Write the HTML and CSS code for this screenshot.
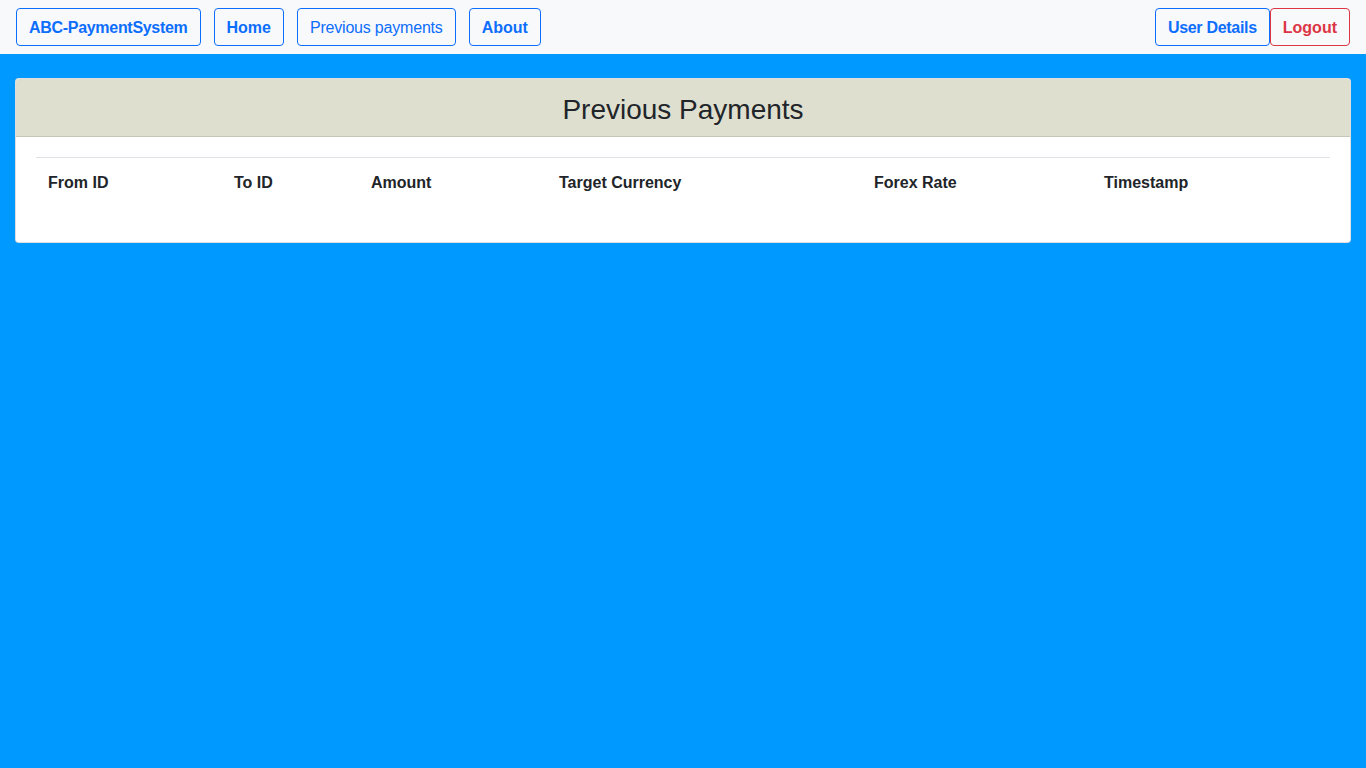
FILE: index.html
```html
<!DOCTYPE html>
<html lang="en">
<head>
<meta charset="utf-8">
<title>ABC-PaymentSystem</title>
<link rel="stylesheet" href="styles.css">
</head>
<body>
<nav class="navbar">
  <div class="nav-left">
    <a class="btn btn-primary bold brand" href="#">ABC-PaymentSystem</a>
    <a class="btn btn-primary bold" href="#">Home</a>
    <a class="btn btn-primary light" href="#">Previous payments</a>
    <a class="btn btn-primary bold" href="#">About</a>
  </div>
  <div class="nav-right">
    <a class="btn btn-primary bold tight" href="#">User Details</a>
    <a class="btn btn-danger bold" href="#">Logout</a>
  </div>
</nav>
<main class="page">
  <section class="card">
    <header class="card-header">
      <h3 class="card-title">Previous Payments</h3>
    </header>
    <div class="card-body">
      <table class="table">
        <thead>
          <tr>
            <th class="c-from">From ID</th>
            <th class="c-to">To ID</th>
            <th class="c-amount">Amount</th>
            <th class="c-currency">Target Currency</th>
            <th class="c-rate">Forex Rate</th>
            <th class="c-time">Timestamp</th>
          </tr>
        </thead>
        <tbody></tbody>
      </table>
    </div>
  </section>
</main>
</body>
</html>
```
FILE: styles.css
```css
* { box-sizing: border-box; }
html, body {
  margin: 0;
  padding: 0;
  height: 100%;
}
body {
  background: #0099ff;
  font-family: "Liberation Sans", Arial, sans-serif;
  font-size: 16px;
  line-height: 1.5;
  color: #212529;
}
.navbar {
  display: flex;
  justify-content: space-between;
  align-items: center;
  height: 54px;
  padding: 8px 16px;
  background: #f8f9fa;
}
.nav-left {
  display: flex;
  gap: 13px;
}
.nav-right {
  display: flex;
}
.btn {
  display: inline-block;
  height: 38px;
  padding: 7px 12px 5px;
  border: 1px solid #0d6efd;
  border-radius: 4px;
  font-size: 16px;
  line-height: 24px;
  text-decoration: none;
  color: #0d6efd;
  background: transparent;
  white-space: nowrap;
}
.btn.bold { font-weight: 700; }
.btn.brand,
.btn.tight { letter-spacing: -0.3px; }
.btn.light { letter-spacing: -0.2px; }
.btn-danger {
  border-color: #dc3545;
  color: #dc3545;
}
.page {
  padding: 24px 15px;
}
.card {
  background: #fff;
  border: 1px solid rgba(0,0,0,0.125);
  border-radius: 4px;
  overflow: hidden;
}
.card-header {
  background: #dfdfd0;
  border-bottom: 1px solid #c6c6b8;
  padding: 14px 20px 10px;
  text-align: center;
}
.card-title {
  margin: 0;
  font-size: 28px;
  font-weight: 500;
  line-height: 33px;
}
.card-body {
  padding: 20px;
}
.table {
  width: 100%;
  border-collapse: collapse;
  margin-bottom: 16px;
}
.table th {
  text-align: left;
  font-weight: 700;
  font-size: 16px;
  padding: 13px 12px 11px;
  line-height: 24px;
  border-top: 1px solid #dee2e6;
  vertical-align: top;
}
.c-from { width: 186px; }
.c-to { width: 137px; }
.c-amount { width: 188px; }
.c-currency { width: 315px; }
.c-rate { width: 230px; }
```
